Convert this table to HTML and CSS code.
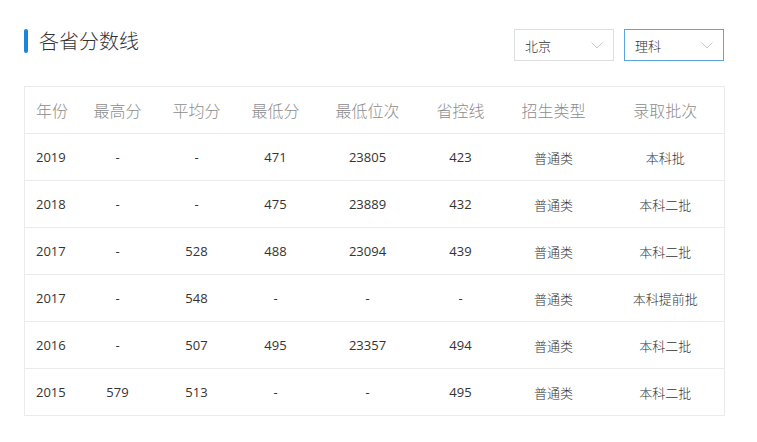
FILE: index.html
```html
<!DOCTYPE html>
<html lang="zh">
<head>
<meta charset="utf-8">
<link rel="stylesheet" href="styles.css">
</head>
<body>
<div class="panel">
  <div class="head">
    <h2 class="title"><span class="bar"></span>各省分数线</h2>
    <div class="filters">
      <div class="select"><span>北京</span><svg class="chev" width="12" height="7" viewBox="0 0 12 7"><path d="M0.5 0.5 L6 6 L11.5 0.5" fill="none" stroke="#c8c8c8" stroke-width="1"/></svg></div>
      <div class="select active"><span>理科</span><svg class="chev" width="12" height="7" viewBox="0 0 12 7"><path d="M0.5 0.5 L6 6 L11.5 0.5" fill="none" stroke="#c8c8c8" stroke-width="1"/></svg></div>
    </div>
  </div>
  <table class="scores">
    <colgroup>
      <col class="c1"><col class="c2"><col class="c3"><col class="c4"><col class="c5"><col class="c6"><col class="c7"><col class="c8">
    </colgroup>
    <thead>
      <tr><th>年份</th><th>最高分</th><th>平均分</th><th>最低分</th><th>最低位次</th><th>省控线</th><th>招生类型</th><th>录取批次</th></tr>
    </thead>
    <tbody>
      <tr><td>2019</td><td>-</td><td>-</td><td>471</td><td>23805</td><td>423</td><td class="cjk">普通类</td><td class="cjk">本科批</td></tr>
      <tr><td>2018</td><td>-</td><td>-</td><td>475</td><td>23889</td><td>432</td><td class="cjk">普通类</td><td class="cjk">本科二批</td></tr>
      <tr><td>2017</td><td>-</td><td>528</td><td>488</td><td>23094</td><td>439</td><td class="cjk">普通类</td><td class="cjk">本科二批</td></tr>
      <tr><td>2017</td><td>-</td><td>548</td><td>-</td><td>-</td><td>-</td><td class="cjk">普通类</td><td class="cjk">本科提前批</td></tr>
      <tr><td>2016</td><td>-</td><td>507</td><td>495</td><td>23357</td><td>494</td><td class="cjk">普通类</td><td class="cjk">本科二批</td></tr>
      <tr><td>2015</td><td>579</td><td>513</td><td>-</td><td>-</td><td>495</td><td class="cjk">普通类</td><td class="cjk">本科二批</td></tr>
    </tbody>
  </table>
</div>
</body>
</html>
```

FILE: styles.css
```css
html, body {
  margin: 0;
  padding: 0;
  background: #fff;
}
body {
  font-family: "Open Sans", "Noto Sans CJK SC", sans-serif;
  color: #333;
}
.panel {
  width: 700px;
  padding: 29px 0 0 24px;
}
.head {
  display: flex;
  justify-content: space-between;
  align-items: flex-start;
  height: 57px;
}
.title {
  margin: 0;
  display: flex;
  align-items: center;
  height: 24px;
  font-size: 20px;
  font-weight: 300;
  color: #333;
  line-height: 24px;
  font-family: "Noto Sans CJK SC", sans-serif;
}
.bar {
  display: inline-block;
  width: 4px;
  height: 24px;
  border-radius: 2px;
  background: #1a86d8;
  margin-right: 11px;
}
.filters {
  display: flex;
  gap: 10px;
}
.select {
  box-sizing: border-box;
  width: 100px;
  height: 32px;
  border: 1px solid #dedede;
  display: flex;
  align-items: center;
  justify-content: space-between;
  padding: 0 10px 0 10px;
  font-size: 13px;
  font-weight: 300;
  color: #333;
  font-family: "Noto Sans CJK SC", sans-serif;
}
.select.active {
  border-color: #5aa5dd;
}
.chev {
  display: block;
}
.scores {
  width: 700px;
  border-collapse: collapse;
  border: 1px solid #ebebeb;
  table-layout: fixed;
}
.c1 { width: 54px; }
.c2 { width: 78px; }
.c3 { width: 80px; }
.c4 { width: 78px; }
.c5 { width: 106px; }
.c6 { width: 80px; }
.c7 { width: 106px; }
.c8 { width: 118px; }
.scores th {
  height: 46px;
  font-size: 16px;
  font-weight: 300;
  color: #8c8c8c;
  text-align: center;
  font-family: "Noto Sans CJK SC", sans-serif;
  border-bottom: 1px solid #ebebeb;
  padding: 0;
}
.scores td {
  height: 46px;
  font-size: 13px;
  color: #333;
  text-align: center;
  border-bottom: 1px solid #ebebeb;
  padding: 0;
}
.scores td.cjk {
  font-family: "Noto Sans CJK SC", sans-serif;
  font-weight: 300;
}
.scores th:first-child,
.scores td:first-child {
  text-align: left;
  padding-left: 11px;
}
```
